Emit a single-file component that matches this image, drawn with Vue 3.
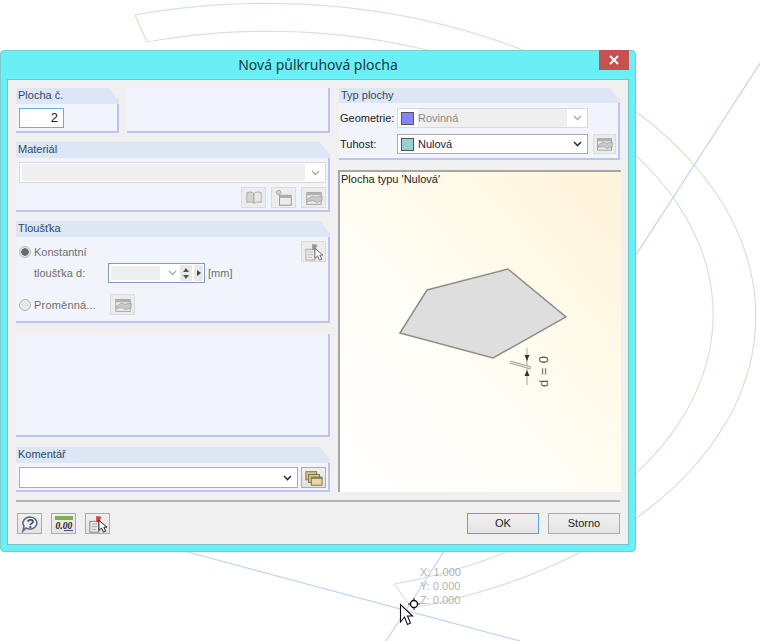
<template>
  <div class="desktop">
    <!-- model behind the dialog -->
    <svg class="model" width="760" height="641" viewBox="0 0 760 641">
      <defs>
        <symbol id="ico-book" viewBox="0 0 24 20">
          <path d="M4 4c3-1 6-1 8 1v11c-2-2-5-2-8-1z" fill="#d8c48c" stroke="#8a7a50" />
          <path d="M20 4c-3-1-6-1-8 1v11c2-2 5-2 8-1z" fill="#efe4bd" stroke="#8a7a50" />
        </symbol>
        <symbol id="ico-tree" viewBox="0 0 24 20">
          <rect x="7" y="7" width="13" height="11" fill="#f4f0dc" stroke="#555" />
          <rect x="7" y="7" width="13" height="3" fill="#8a8a6a" />
          <circle cx="6" cy="4" r="2.500" fill="#d8c48c" stroke="#777" />
        </symbol>
        <symbol id="ico-edit" viewBox="0 0 24 20">
          <rect x="4" y="4" width="16" height="13" fill="#f4f0dc" stroke="#666" />
          <rect x="4" y="4" width="16" height="3" fill="#7f8f7f" />
          <path d="M5 11l5-3 4 1 7-1v5l-6 2-4-2-6 1z" fill="#c8b078" stroke="#6d6040" stroke-width=".7" />
        </symbol>
        <symbol id="ico-pick" viewBox="0 0 24 20">
          <rect x="3" y="7" width="10" height="12" fill="#eee" stroke="#777" />
          <path d="M5 10h6M5 13h6M5 16h5" stroke="#999" />
          <path d="M10 1l6 1-2 4 2 1-6 1z" fill="#d83c4c" />
          <path d="M13 6v11l3-2.500 2 4.500 2.500-1-2-4.500h3.500z" fill="#fff" stroke="#111" />
        </symbol>
        <symbol id="ico-stack" viewBox="0 0 24 20">
          <rect x="3" y="3" width="12" height="9" fill="#d8c48c" stroke="#7a6c40" />
          <rect x="6" y="6" width="12" height="9" fill="#d8c48c" stroke="#7a6c40" />
          <rect x="9" y="9" width="12" height="9" fill="#e6d8a8" stroke="#7a6c40" />
          <rect x="9" y="9" width="12" height="2" fill="#8a7c48" />
        </symbol>
      </defs>
      <path class="arc" :d="outerArc" />
      <path class="arc" :d="innerArc" />
      <path class="arc" d="M135 15L147 42M394 584L412 608" />
      <path class="axis" d="M801 0L386 641M180 550L520 641" />
    </svg>

    <div class="coords">
      <span>X: 1.000</span>
      <span>Y: 0.000</span>
      <span>Z: 0.000</span>
    </div>

    <div class="dialog">
      <div class="titlebar">
        <span class="title">Nová půlkruhová plocha</span>
        <div class="close">
          <svg width="10" height="10" viewBox="0 0 10 10"><path d="M1 1l8 8M9 1l-8 8" stroke="#fff" stroke-width="2" /></svg>
        </div>
      </div>

      <div class="client">
        <div class="main">
          <div class="col-left">
            <div class="row-top">
              <div class="panel number">
                <div class="panel-head">Plocha č.</div>
                <div class="num-input">2</div>
              </div>
              <div class="panel blank"></div>
            </div>

            <div class="panel material">
              <div class="panel-head">Materiál</div>
              <div class="combo off">
                <span class="combo-fill"></span>
                <svg class="chev" width="9" height="6" viewBox="0 0 9 6"><path d="M1 1l3.500 3.500L8 1" /></svg>
              </div>
              <div class="tools">
                <div class="btn off"><svg width="22" height="18"><use href="#ico-book" /></svg></div>
                <div class="btn off"><svg width="22" height="18"><use href="#ico-tree" /></svg></div>
                <div class="btn off"><svg width="22" height="18"><use href="#ico-edit" /></svg></div>
              </div>
            </div>

            <div class="panel thickness">
              <div class="panel-head">Tloušťka</div>
              <div class="th-row first">
                <span class="radio checked"></span>
                <span class="muted">Konstantní</span>
                <div class="btn off push"><svg width="22" height="18"><use href="#ico-pick" /></svg></div>
              </div>
              <div class="th-row second">
                <span class="muted th-label">tloušťka d:</span>
                <div class="th-combo">
                  <span class="th-fill"></span>
                  <svg class="chev" width="9" height="6" viewBox="0 0 9 6"><path d="M1 1l3.500 3.500L8 1" /></svg>
                  <span class="spin">
                    <i class="up"></i>
                    <i class="down"></i>
                  </span>
                  <span class="more"></span>
                </div>
                <span class="muted unit">[mm]</span>
              </div>
              <div class="th-row third">
                <span class="radio"></span>
                <span class="muted var-label">Proměnná...</span>
                <div class="btn off"><svg width="22" height="18"><use href="#ico-edit" /></svg></div>
              </div>
            </div>

            <div class="panel blank wide"></div>

            <div class="panel comment">
              <div class="panel-head">Komentář</div>
              <div class="comment-row">
                <div class="combo">
                  <span class="combo-fill"></span>
                  <svg class="chev dark" width="9" height="6" viewBox="0 0 9 6"><path d="M1 1l3.500 3.500L8 1" /></svg>
                </div>
                <div class="btn"><svg width="22" height="18"><use href="#ico-stack" /></svg></div>
              </div>
            </div>
          </div>

          <div class="col-right">
            <div class="panel type">
              <div class="panel-head">Typ plochy</div>
              <div class="type-row">
                <span class="type-label">Geometrie:</span>
                <div class="combo off">
                  <span class="swatch geometry"></span>
                  <span class="combo-text">Rovinná</span>
                  <svg class="chev" width="9" height="6" viewBox="0 0 9 6"><path d="M1 1l3.500 3.500L8 1" /></svg>
                </div>
              </div>
              <div class="type-row">
                <span class="type-label">Tuhost:</span>
                <div class="combo">
                  <span class="swatch stiffness"></span>
                  <span class="combo-text">Nulová</span>
                  <svg class="chev dark" width="9" height="6" viewBox="0 0 9 6"><path d="M1 1l3.500 3.500L8 1" /></svg>
                </div>
                <div class="btn off"><svg width="22" height="18"><use href="#ico-edit" /></svg></div>
              </div>
            </div>

            <div class="preview">
              <span class="preview-title">Plocha typu 'Nulová'</span>
              <svg class="sketch" width="281" height="320" viewBox="0 0 281 320">
                <polygon points="60,161 87,118 168,97 226,145 153,186" fill="#dedede" stroke="#8f8f8a" stroke-width="1.500" />
                <path d="M187 176v37" stroke="#a5a5a0" />
                <path d="M170 190l21 6" stroke="#a8a8a0" stroke-width="3" />
                <path d="M170 190l21 6" stroke="#ecece6" stroke-width="1" />
                <path d="M184.500 183h5l-2.500 6zM184.500 204h5l-2.500-6z" fill="#333" />
                <text class="dim" transform="translate(208 215) rotate(-90)">d = 0</text>
              </svg>
            </div>
          </div>
        </div>

        <div class="footer">
          <div class="footer-left">
            <div class="btn">
              <svg width="22" height="18" viewBox="0 0 22 18">
                <path d="M11 2a7 6 0 1 1-4 11l-3 3 1-5a7 6 0 0 1 6-9z" fill="#eef1f8" stroke="#5f6b80" stroke-width="1.600" />
                <text x="7.500" y="13" class="help">?</text>
              </svg>
            </div>
            <div class="btn">
              <svg width="22" height="18" viewBox="0 0 22 18">
                <rect x="2" y="1" width="18" height="4" fill="#7cb342" />
                <text x="2.500" y="14" class="zeros">0.00</text>
                <path d="M11 15.500h9" stroke="#3a4a9a" />
              </svg>
            </div>
            <div class="btn"><svg width="22" height="18"><use href="#ico-pick" /></svg></div>
          </div>
          <div class="footer-right">
            <div class="action default">OK</div>
            <div class="action">Storno</div>
          </div>
        </div>
      </div>
    </div>

    <!-- crosshair and mouse pointer over the model -->
    <svg class="pointer" width="760" height="641" viewBox="0 0 760 641">
      <circle cx="414" cy="604" r="3.500" fill="none" stroke="#111" stroke-width="1.300" />
      <path d="M414 598v3M414 607v3M408 604h3M417 604h3" stroke="#111" />
      <path d="M400.500 604.500v17.500l4-5 3 7.500 3-1.500-3-7h5z" fill="#fff" stroke="#111" stroke-width="1.100" />
    </svg>
  </div>
</template>

<script setup>
// The plate outlines are half ellipses: centre plus two conjugate half axes
const halfEllipse = (c, a, b) => {
  let d = ''
  for (let deg = 0; deg <= 180; deg += 2) {
    const t = (deg * Math.PI) / 180
    const x = c[0] + a[0] * Math.cos(t) + b[0] * Math.sin(t)
    const y = c[1] + a[1] * Math.cos(t) + b[1] * Math.sin(t)
    d += `${deg === 0 ? 'M' : 'L'}${x.toFixed(1)} ${y.toFixed(1)}`
  }
  return d
}

const outerArc = halfEllipse([273.5, 311.5], [-138.5, -296.5], [462, -84])
const innerArc = halfEllipse([270.5, 313], [-123.5, -271], [425, -77])
</script>

<style scoped>
.desktop {
  position: relative;
  width: 760px;
  height: 641px;
  overflow: hidden;
  background-color: #fff;
  font-family: "Liberation Sans", Arial, sans-serif;
  font-size: 11px;
  color: #1c1c1c;
}

.model,
.pointer {
  position: absolute;
  left: 0;
  top: 0;
}

.pointer {
  pointer-events: none;
}

.arc {
  fill: none;
  stroke: #d2e6cf;
  stroke-width: 1.2;
}

.axis {
  fill: none;
  stroke: #bcd6f8;
  stroke-width: 1.2;
}

.coords {
  position: absolute;
  left: 420px;
  top: 565px;
  display: flex;
  flex-direction: column;
  line-height: 14px;
  font-size: 11px;
  color: #b2b2b2;
}

.dialog {
  position: absolute;
  left: 0;
  top: 50px;
  width: 636px;
  height: 502px;
  display: flex;
  flex-direction: column;
  box-sizing: border-box;
  background-color: #69f0f6;
  border: 1px solid #7fc8cc;
  border-radius: 4px;
}

.titlebar {
  position: relative;
  height: 28px;
  flex-shrink: 0;
  display: flex;
  align-items: center;
  justify-content: center;
}

.title {
  font-family: "Noto Sans", sans-serif;
  font-size: 14px;
  margin-top: -2px;
  color: #20393c;
}

.close {
  position: absolute;
  right: 6px;
  top: -1px;
  width: 30px;
  height: 20px;
  display: flex;
  align-items: center;
  justify-content: center;
  background-color: #c75050;
}

.client {
  flex: 1;
  margin: 0 6px 6px 6px;
  padding: 8px 7px 0 8px;
  display: flex;
  flex-direction: column;
  background-color: #f0f0f0;
  border: 1px solid #74c4c8;
  min-height: 0;
}

.main {
  display: flex;
  gap: 8px;
  height: 404px;
}

.col-left {
  width: 315px;
  display: flex;
  flex-direction: column;
  gap: 9px;
}

.col-right {
  width: 283px;
  display: flex;
  flex-direction: column;
  gap: 10px;
}

.row-top {
  display: flex;
  gap: 8px;
  height: 45px;
  flex-shrink: 0;
}

.panel {
  box-sizing: border-box;
  background-color: #f1f4fb;
  border-right: 2px solid #c2c2f0;
  border-bottom: 2px solid #c2c2f0;
  clip-path: polygon(0 0, calc(100% - 10px) 0, 100% 13px, 100% 100%, 0 100%);
}

.panel-head {
  height: 16px;
  margin-right: -2px;
  padding-left: 2px;
  line-height: 15px;
  background-color: #dce6f5;
  color: #2c4a68;
}

.panel.blank {
  flex: 1;
  clip-path: none;
}

.panel.number {
  width: 103px;
  flex-shrink: 0;
}

.num-input {
  box-sizing: border-box;
  width: 45px;
  height: 20px;
  margin: 4px 0 0 3px;
  padding-right: 5px;
  text-align: right;
  line-height: 18px;
  font-size: 13px;
  background-color: #fff;
  border: 1px solid #6da8ec;
}

.panel.material {
  height: 70px;
  flex-shrink: 0;
  padding: 0 2px 0 3px;
}

.panel.material .panel-head {
  margin: 0 -4px 4px -3px;
}

.combo {
  flex: 1;
  box-sizing: border-box;
  height: 21px;
  display: flex;
  align-items: center;
  padding: 0 5px 0 2px;
  background-color: #fff;
  border: 1px solid #acacac;
}

.combo.off {
  border-color: #d9d9d9;
  color: #8a8a8a;
}

.combo-fill {
  flex: 1;
  align-self: stretch;
  margin: 1px 6px 1px 0;
}

.combo.off .combo-fill {
  background-color: #efefef;
}

.panel.material .combo {
  flex: none;
}

.chev {
  flex-shrink: 0;
  fill: none;
  stroke: #aaa;
  stroke-width: 1.300;
}

.chev.dark {
  stroke: #333;
  stroke-width: 1.600;
}

.tools {
  display: flex;
  justify-content: flex-end;
  gap: 5px;
  margin-top: 4px;
}

.btn {
  box-sizing: border-box;
  width: 25px;
  height: 21px;
  flex-shrink: 0;
  display: flex;
  align-items: center;
  justify-content: center;
  background: linear-gradient(#f0f0f0, #e3e3e3);
  border: 1px solid #acacac;
}

.btn.off {
  background: #ececec;
  border-color: #dcdcdc;
}

.btn.off svg {
  filter: grayscale(1);
  opacity: 0.6;
}

.panel.thickness {
  height: 102px;
  flex-shrink: 0;
  padding: 0 2px 0 3px;
}

.panel.thickness .panel-head {
  margin: 0 -4px 0 -3px;
}

.muted {
  color: #6e6e6e;
}

.th-row {
  display: flex;
  align-items: center;
}

.th-row.first {
  height: 21px;
  margin-top: 4px;
}

.th-row.second {
  height: 20px;
  margin-top: 1px;
}

.th-row.third {
  height: 21px;
  margin-top: 11px;
}

.push {
  margin-left: auto;
}

.radio {
  box-sizing: border-box;
  width: 12px;
  height: 12px;
  margin-right: 3px;
  flex-shrink: 0;
  border: 1px solid #b4b4b4;
  border-radius: 50%;
  background-color: #e8e8e8;
}

.radio.checked {
  background: radial-gradient(circle, #6a6a6a 0 3.500px, #ececec 4px);
}

.th-label {
  width: 74px;
  margin-left: 15px;
  flex-shrink: 0;
}

.th-combo {
  box-sizing: border-box;
  width: 97px;
  height: 20px;
  display: flex;
  align-items: center;
  padding: 0 1px 0 2px;
  background-color: #fff;
  border: 1px solid #7f9cc4;
}

.th-fill {
  width: 51px;
  height: 14px;
  margin-right: 8px;
  background-color: #efefef;
}

.spin {
  width: 13px;
  height: 16px;
  margin-left: 3px;
  display: flex;
  flex-direction: column;
  justify-content: center;
  align-items: center;
  gap: 3px;
  background-color: #e8e8e8;
}

.spin i {
  width: 0;
  height: 0;
  border-left: 3px solid transparent;
  border-right: 3px solid transparent;
}

.spin .up {
  border-bottom: 4px solid #555;
}

.spin .down {
  border-top: 4px solid #555;
}

.more {
  position: relative;
  width: 9px;
  height: 16px;
  margin-left: 2px;
  background-color: #e8e8e8;
}

.more::after {
  content: "";
  position: absolute;
  left: 3px;
  top: 5px;
  border-top: 3px solid transparent;
  border-bottom: 3px solid transparent;
  border-left: 4px solid #444;
}

.unit {
  margin-left: 3px;
}

.var-label {
  width: 76px;
  flex-shrink: 0;
  letter-spacing: 0.2px;
}

.panel.wide {
  margin-top: 2px;
  margin-bottom: 1px;
}

.panel.comment {
  height: 45px;
  flex-shrink: 0;
  padding: 0 2px 0 3px;
}

.panel.comment .panel-head {
  margin: 0 -4px 4px -3px;
}

.comment-row {
  display: flex;
  gap: 3px;
}

.panel.type {
  height: 72px;
  flex-shrink: 0;
  margin-left: 1px;
  margin-right: 1px;
  padding: 0 3px 0 1px;
}

.panel.type .panel-head {
  margin: 0 -5px 5px -1px;
  height: 15px;
}

.type-row {
  display: flex;
  align-items: center;
  gap: 5px;
  height: 20px;
  margin-bottom: 6px;
}

.type-label {
  width: 52px;
  flex-shrink: 0;
}

.type-row .combo {
  flex: none;
  width: 191px;
  height: 20px;
}

.type-row .btn {
  width: 23px;
  height: 20px;
}

.swatch {
  box-sizing: border-box;
  width: 13px;
  height: 13px;
  margin: 0 4px 0 1px;
  flex-shrink: 0;
  border: 1px solid #555;
}

.swatch.geometry {
  background-color: #8484ff;
}

.swatch.stiffness {
  background-color: #99cfcf;
}

.combo-text {
  flex: 1;
  align-self: stretch;
  line-height: 18px;
}

.combo.off .combo-text {
  background-color: #efefef;
  margin-right: 6px;
}

.combo:not(.off) .combo-text {
  color: #1a1a40;
}

.preview {
  flex: 1;
  position: relative;
  box-sizing: border-box;
  padding-left: 1px;
  background: linear-gradient(to top right, #fff 0%, #fffdf6 40%, #fff9e7 70%, #fff3da 100%);
  border-left: 2px solid #a6a6a6;
  border-top: 2px solid #a6a6a6;
}

.preview-title {
  line-height: 15px;
}

.sketch {
  position: absolute;
  left: 0;
  top: 0;
}

.dim {
  font-family: "Liberation Sans", Arial, sans-serif;
  font-size: 13px;
  letter-spacing: 0.4px;
  fill: #555;
}

.help {
  font-family: "Liberation Sans", Arial, sans-serif;
  font-size: 13px;
  font-weight: bold;
  fill: #3a4a6a;
}

.zeros {
  font-family: "Liberation Serif", serif;
  font-size: 9.500px;
  font-style: italic;
  font-weight: bold;
  fill: #222;
}

.footer {
  margin-top: 8px;
  margin-right: 1px;
  padding-top: 11px;
  display: flex;
  justify-content: space-between;
  border-top: 2px solid #b4b4b4;
}

.footer-left {
  display: flex;
  gap: 9px;
  margin-left: 1px;
}

.footer-right {
  display: flex;
  gap: 9px;
}

.action {
  box-sizing: border-box;
  width: 72px;
  height: 21px;
  line-height: 19px;
  text-align: center;
  background: linear-gradient(#f0f0f0, #e4e4e4);
  border: 1px solid #acacac;
}

.action.default {
  border-color: #5c9fea;
}
</style>
